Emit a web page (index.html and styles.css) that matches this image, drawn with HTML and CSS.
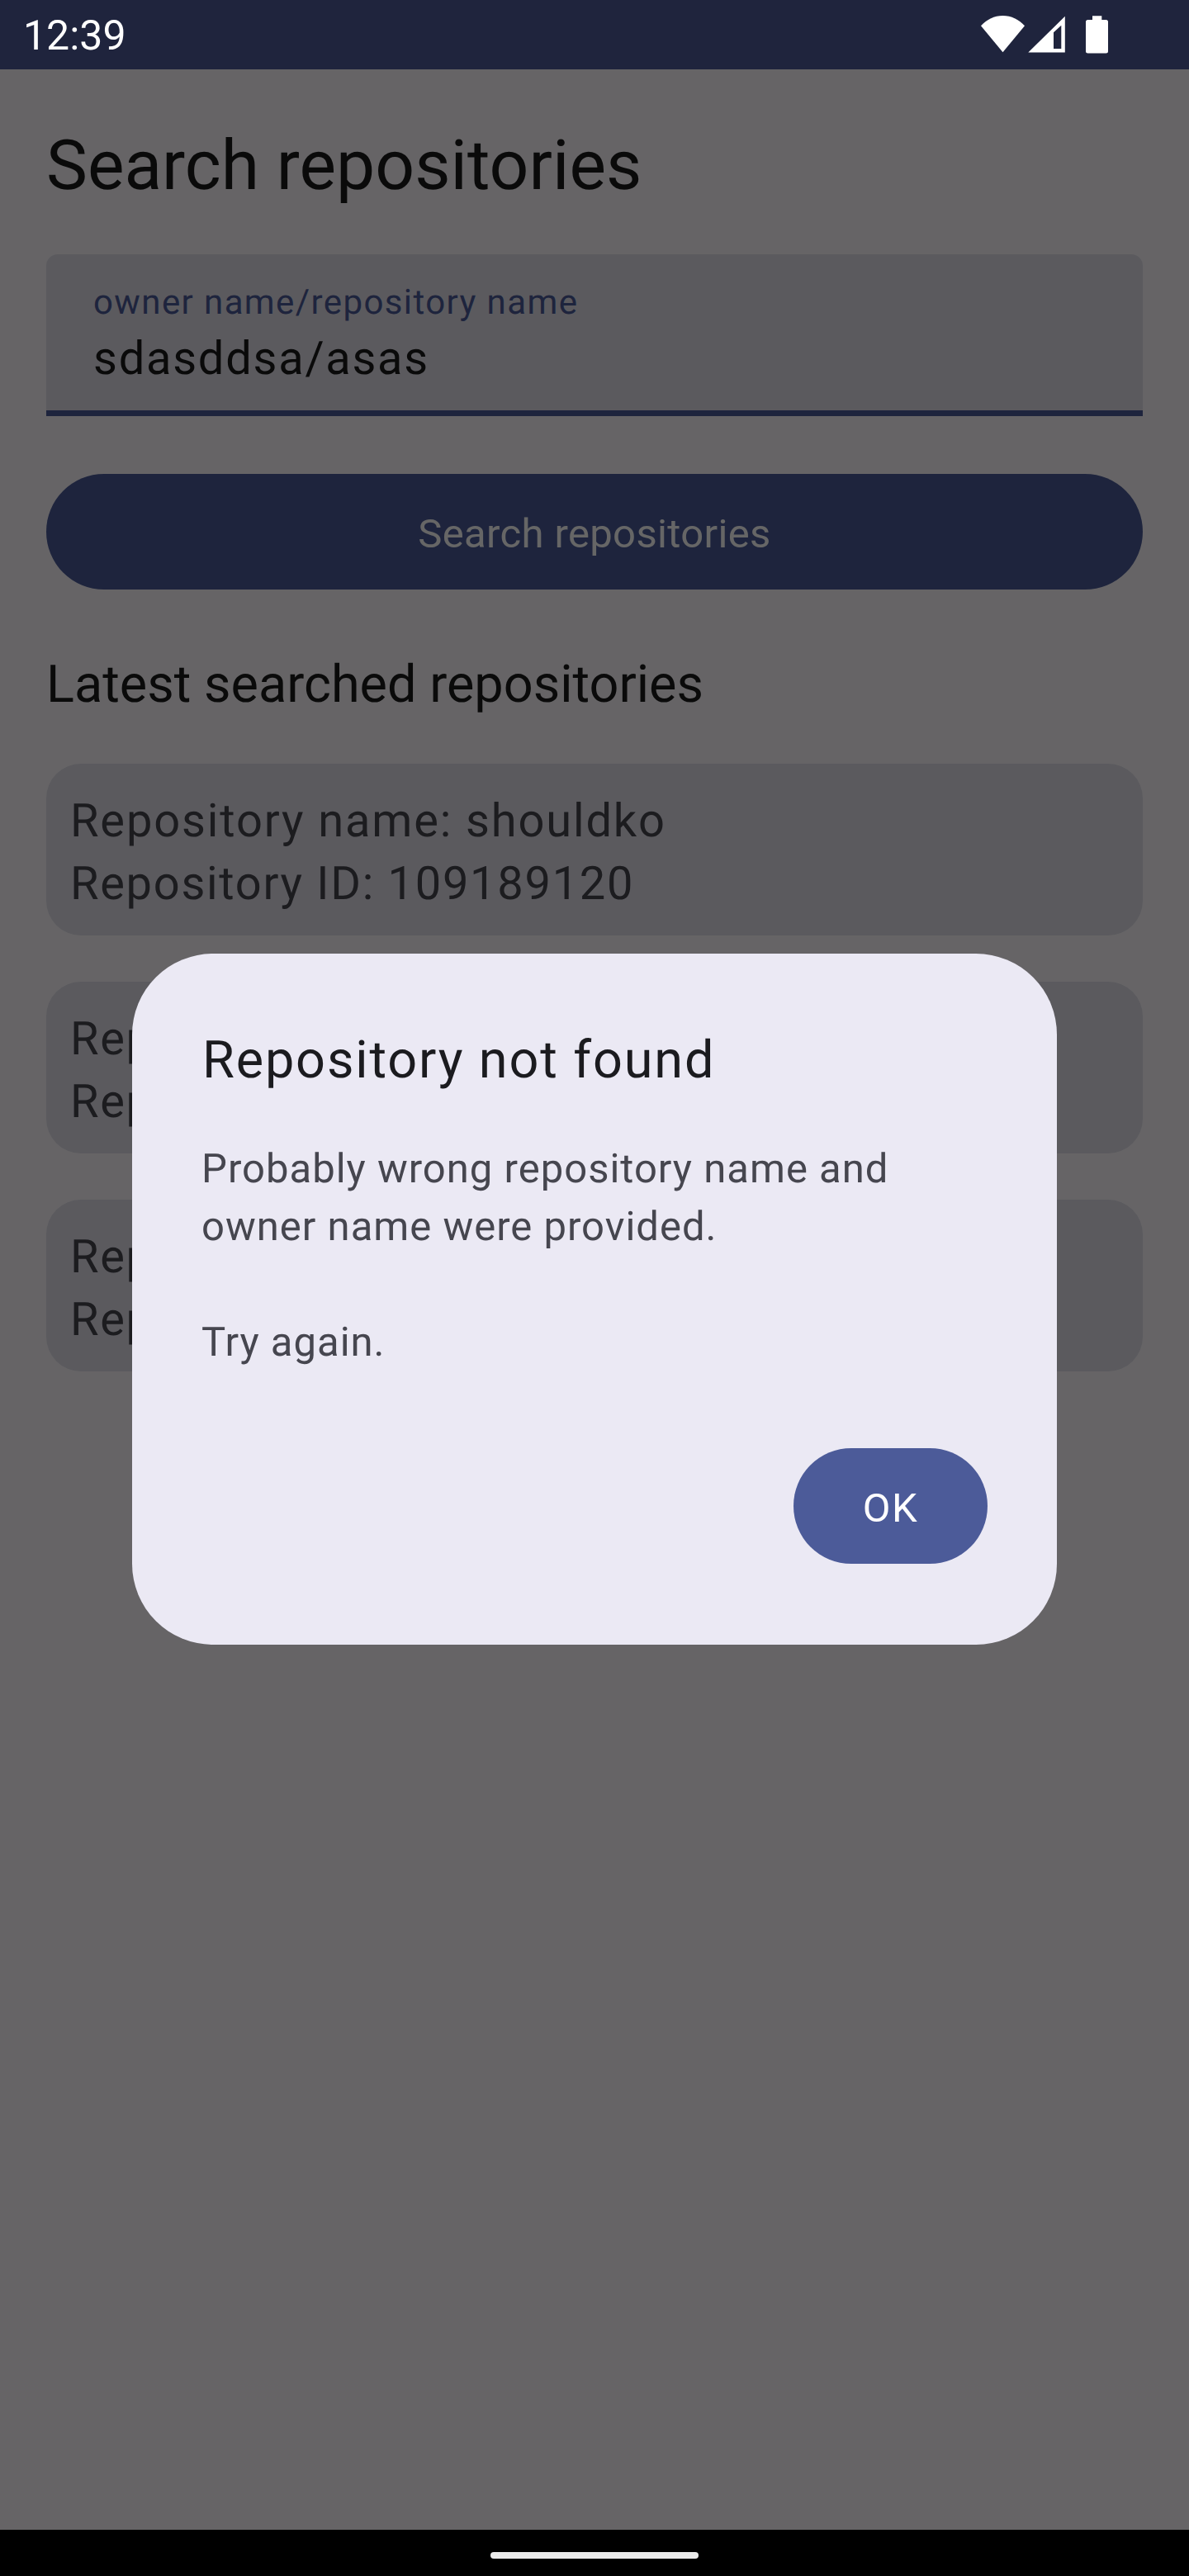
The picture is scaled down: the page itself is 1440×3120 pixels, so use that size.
FILE: index.html
```html
<!DOCTYPE html>
<html lang="en">
<head>
<meta charset="utf-8">
<title>Search repositories</title>
<link rel="stylesheet" href="styles.css">
</head>
<body>
<header class="status-bar">
  <span class="clock">12:39</span>
  <svg class="status-icons" width="156" height="48" viewBox="0 0 156 48" fill="#fff" aria-hidden="true">
    <path d="M0 13.2C7.3 5.6 16.300 1 26.500 1S45.700 5.600 53 13.200L26.500 45.200Z"/>
    <path fill-rule="evenodd" d="M57.300 45.500L101.800 1.700V45.500ZM88 41H97.300V12.800L88 21.300Z"/>
    <path d="M135 1.300H146.300V6H151.500Q154 6 154 8.500V44Q154 46.500 151.500 46.500H129.500Q127 46.500 127 44V8.500Q127 6 129.500 6H135Z"/>
  </svg>
</header>
<main class="screen">
  <h1 class="title">Search repositories</h1>
  <div class="field">
    <span class="field-label">owner name/repository name</span>
    <span class="field-value">sdasddsa/asas</span>
  </div>
  <button class="button search-button">Search repositories</button>
  <h2 class="subtitle">Latest searched repositories</h2>
  <div class="cards">
    <div class="card"><p class="card-name">Repository name: shouldko</p><p>Repository ID: 109189120</p></div>
    <div class="card"><p>Rep</p><p>Rep</p></div>
    <div class="card"><p>Rep</p><p>Rep</p></div>
  </div>
  <div class="scrim">
    <section class="dialog" role="dialog">
      <h2 class="dialog-title">Repository not found</h2>
      <p class="dialog-text">Probably wrong repository name and<br>owner name were provided.<br><br>Try again.</p>
      <button class="button ok-button">OK</button>
    </section>
  </div>
</main>
<footer class="nav-bar"><div class="nav-handle"></div></footer>
</body>
</html>
```
FILE: styles.css
```css
* { box-sizing: border-box; margin: 0; padding: 0; }

body {
  width: 1440px;
  height: 3120px;
  display: flex;
  flex-direction: column;
  font-family: Roboto, sans-serif;
  font-weight: 400;
  text-rendering: geometricPrecision;
  overflow: hidden;
}

h1, h2 { font-weight: 400; }

.status-bar {
  height: 84px;
  padding: 5px 96px 0 28px;
  display: flex;
  align-items: flex-start;
  justify-content: space-between;
  background: #1f243d;
  color: #fff;
}
.clock { font-size: 50px; line-height: 78px; }
.status-icons { margin-top: 13px; }

.screen {
  position: relative;
  flex: 1;
  padding: 60px 56px 0;
  background: #fefbff;
}
.title { font-size: 84px; line-height: 113px; color: #1a1a1a; }

.field {
  height: 196px;
  margin-top: 51px;
  padding: 31px 56px 0 57px;
  display: flex;
  flex-direction: column;
  gap: 12px;
  background: #e3e1ec;
  border-bottom: 7px solid #4c5b99;
  border-radius: 14px 14px 0 0;
}
.field-label { font-size: 42px; line-height: 55px; letter-spacing: 1.4px; color: #4c5b99; }
.field-value { font-size: 56px; line-height: 56px; letter-spacing: 1.75px; color: #1a1a1a; }

.button {
  display: block;
  height: 140px;
  padding-top: 5px;
  border: 0;
  border-radius: 70px;
  background: #4c5b99;
  color: #fff;
  font: 400 49px/135px Roboto, sans-serif;
}
.search-button { width: 100%; margin-top: 70px; letter-spacing: 0.35px; }

.subtitle { margin-top: 74px; font-size: 63px; line-height: 83px; color: #1a1a1a; }

.cards { margin-top: 54px; display: flex; flex-direction: column; gap: 56px; }
.card {
  height: 208px;
  padding: 31px 28px 0 29px;
  border-radius: 42px;
  background: #e3e1ec;
  color: #46464f;
  font-size: 56px;
  line-height: 76px;
  letter-spacing: 1.7px;
}
.card-name { letter-spacing: 1.86px; }

.scrim {
  position: absolute;
  inset: 0;
  display: flex;
  flex-direction: column;
  align-items: center;
  padding-top: 1071px;
  background: rgba(0, 0, 0, 0.6);
}
.dialog {
  width: 1120px;
  height: 837px;
  padding: 88px 84px 0;
  display: flex;
  flex-direction: column;
  border-radius: 98px;
  background: #ebe9f4;
}
.dialog-title { padding-left: 1px; font-size: 63px; line-height: 83px; letter-spacing: 1.84px; color: #1b1b1f; }
.dialog-text { margin-top: 54.5px; font-size: 49px; line-height: 70px; letter-spacing: 1px; color: #46464f; }
.ok-button { align-self: flex-end; width: 235px; margin-top: 93.5px; letter-spacing: 1.4px; }

.nav-bar { height: 56px; padding-top: 27px; background: #000; }
.nav-handle { width: 252px; height: 8px; margin: 0 auto; border-radius: 4px; background: #ebebeb; }
```
